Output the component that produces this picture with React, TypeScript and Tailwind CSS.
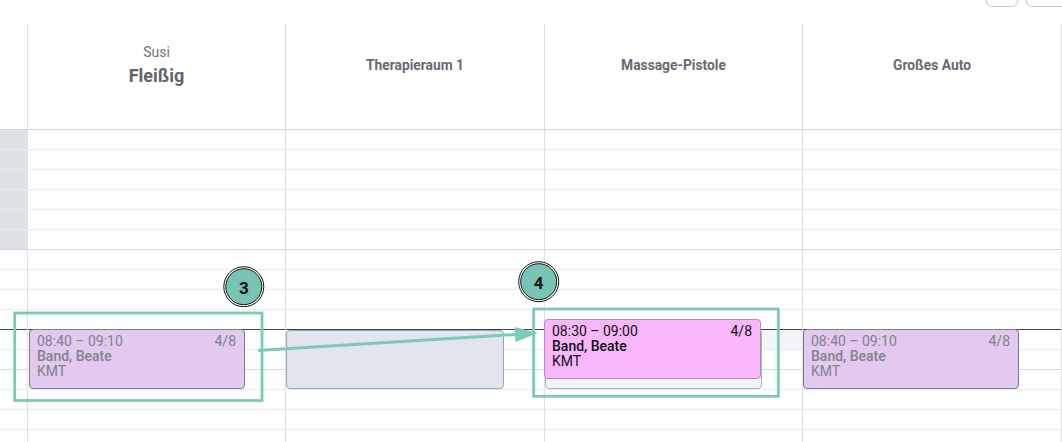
import React from "react";

const ROWS = 16;
const HOUR_ROWS = [5, 11];
const NOW_ROW = 9;

function rowLine(i: number) {
  if (i === NOW_ROW) return "border-[#3e4551]";
  if (HOUR_ROWS.includes(i)) return "border-[#d6d8dc]";
  return "border-[#e9eaed]";
}

interface EventProps {
  time: string;
  name: string;
  info: string;
  count: string;
  tone: "muted" | "active";
  className: string;
}

function EventCard({ time, name, info, count, tone, className }: EventProps) {
  const look =
    tone === "active"
      ? "bg-[#f8b6fb] border-[#b58cb8] text-[#111111]"
      : "bg-[#e2c9ed] border-[#6f7e9c] text-[#80838c]";
  return (
    <div
      className={`absolute h-[60px] rounded-[4px] border pt-1 pl-[7px] pr-[8px] text-[14px] leading-[15px] ${look} ${className}`}
    >
      <div className="flex justify-between">
        <span>{time}</span>
        <span>{count}</span>
      </div>
      <div className="font-medium">{name}</div>
      <div>{info}</div>
    </div>
  );
}

function Column({ children, highlightRow }: { children?: React.ReactNode; highlightRow?: number }) {
  return (
    <div className="relative border-r border-[#dfe1e5]">
      {Array.from({ length: ROWS }).map((_, i) => (
        <div
          key={i}
          className={`h-5 border-b ${rowLine(i)} ${i === highlightRow ? "bg-[#f3f5f8]" : ""}`}
        />
      ))}
      {children}
    </div>
  );
}

function Marker({ cx, cy, label }: { cx: number; cy: number; label: string }) {
  return (
    <g>
      <circle cx={cx} cy={cy} r={20} fill="#ffffff" stroke="#111111" strokeWidth={1} />
      <circle cx={cx} cy={cy} r={18} fill="#77c4b4" stroke="#111111" strokeWidth={1} />
      <text
        x={cx}
        y={cy + 1}
        textAnchor="middle"
        dominantBaseline="central"
        fontFamily="Roboto, sans-serif"
        fontWeight={700}
        fontSize={17}
        fill="#111111"
      >
        {label}
      </text>
    </g>
  );
}

export default function App() {
  const headers = ["Therapieraum 1", "Massage-Pistole", "Großes Auto"];

  return (
    <div className="relative h-[442px] w-[1062px] overflow-hidden bg-white font-['Roboto',sans-serif]">
      {/* toolbar remnants */}
      <div className="flex h-6 items-start justify-end gap-2 overflow-hidden">
        <div className="-mt-[25px] h-8 w-8 rounded-md border border-[#c4c6ca] bg-white" />
        <div className="-mr-3 -mt-[25px] h-8 w-12 rounded-md border border-[#c4c6ca] bg-white" />
      </div>

      {/* resource header */}
      <div className="grid h-[106px] grid-cols-[28px_258px_259px_258px_1fr] border-b border-[#d3d5da]">
        <div className="border-r border-[#dfe1e5]" />
        <div className="flex flex-col items-center border-r border-[#dfe1e5] pt-[18px]">
          <span className="text-[14px] leading-5 text-[#70747b]">Susi</span>
          <span className="mt-[2px] text-[18px] font-bold leading-6 text-[#5f656e]">Fleißig</span>
        </div>
        {headers.map((h) => (
          <div key={h} className="flex justify-center border-r border-[#dfe1e5] pt-[31px]">
            <span className="text-[13.8px] font-bold leading-5 text-[#666a72]">{h}</span>
          </div>
        ))}
      </div>

      {/* time grid */}
      <div className="grid grid-cols-[28px_258px_259px_258px_1fr]">
        <div className="border-r border-[#dfe1e5]">
          {Array.from({ length: ROWS }).map((_, i) => (
            <div key={i} className={`h-5 border-b ${rowLine(i)} ${i < 6 ? "bg-[#dee1e6]" : ""}`} />
          ))}
        </div>
        <Column>
          <EventCard
            className="left-px top-[199px] w-[216px]"
            time="08:40 – 09:10"
            name="Band, Beate"
            info="KMT"
            count="4/8"
            tone="muted"
          />
        </Column>
        <Column>
          <div className="absolute left-0 top-[200px] h-[59px] w-[218px] rounded-[4px] border border-[#8ea7b6] bg-[#e2e5ee]" />
        </Column>
        <Column highlightRow={10}>
          <div className="absolute left-0 top-[200px] h-[59px] w-[217px] rounded-[4px] border border-[#a2b4c1] bg-[#f0f3f7]" />
          <EventCard
            className="-left-px top-[189px] w-[217px]"
            time="08:30 – 09:00"
            name="Band, Beate"
            info="KMT"
            count="4/8"
            tone="active"
          />
        </Column>
        <Column>
          <EventCard
            className="left-0 top-[199px] w-[216px]"
            time="08:40 – 09:10"
            name="Band, Beate"
            info="KMT"
            count="4/8"
            tone="muted"
          />
        </Column>
      </div>

      {/* annotation overlay */}
      <svg className="pointer-events-none absolute inset-0" width={1062} height={442} viewBox="0 0 1062 442">
        <rect x={14.7} y={313} width={247.3} height={87.5} fill="none" stroke="#7cc9b9" strokeWidth={2.8} />
        <rect x={533.7} y={309} width={244.6} height={87.3} fill="none" stroke="#7cc9b9" strokeWidth={2.8} />
        <line x1={258} y1={350.5} x2={517} y2={334.4} stroke="#7cc9b9" strokeWidth={3} />
        <polygon points="538,333 515.5,341.9 514.6,326.9" fill="#7cc9b9" />
        <Marker cx={243.8} cy={286.7} label="3" />
        <Marker cx={538.7} cy={281.7} label="4" />
      </svg>
    </div>
  );
}
